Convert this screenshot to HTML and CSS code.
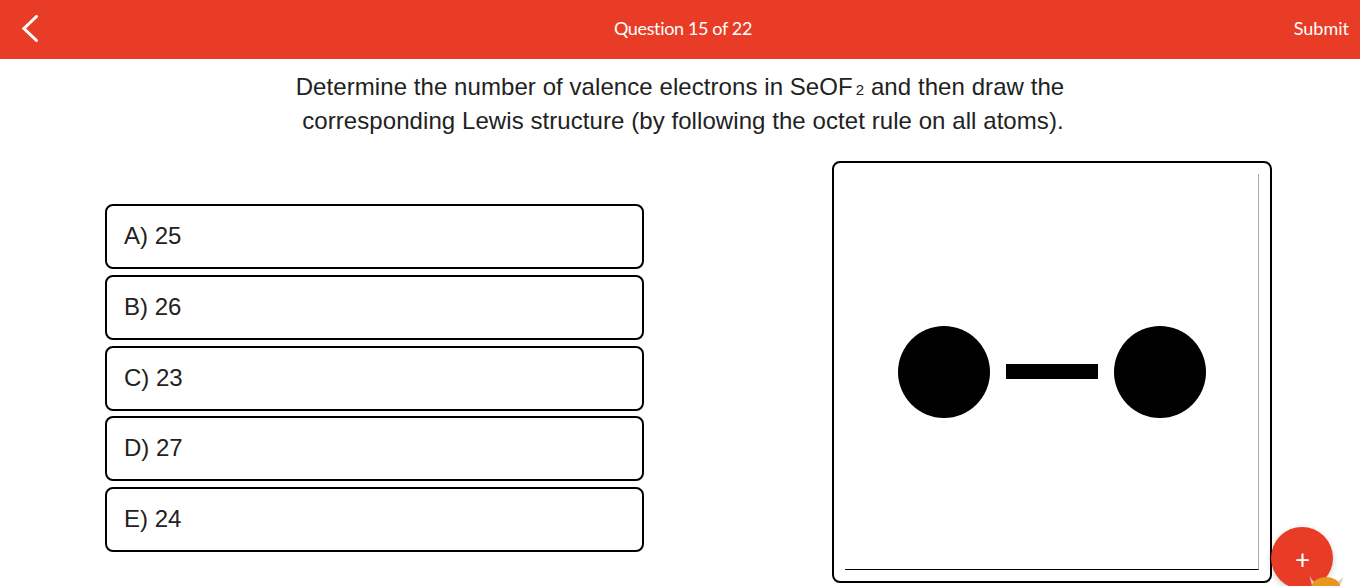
FILE: index.html
```html
<!DOCTYPE html>
<html lang="en">
<head>
<meta charset="utf-8">
<title>Question 15 of 22</title>
<link rel="stylesheet" href="styles.css">
</head>
<body>
<header class="topbar">
  <button class="back" aria-label="Back">
    <svg width="17" height="27" viewBox="0 0 17 27"><path d="M14.5 1.5 L2 13.5 L14.5 25.5" fill="none" stroke="#fff" stroke-width="3" stroke-linecap="round" stroke-linejoin="miter"/></svg>
  </button>
  <div class="progress">Question 15 of 22</div>
  <div class="submit">Submit</div>
</header>
<section class="question">
  <div>Determine the number of valence electrons in SeOF<span class="sub">2</span> and then draw the</div>
  <div class="line2">corresponding Lewis structure (by following the octet rule on all atoms).</div>
</section>
<main class="content">
  <div class="options">
    <div class="option">A) 25</div>
    <div class="option">B) 26</div>
    <div class="option">C) 23</div>
    <div class="option">D) 27</div>
    <div class="option">E) 24</div>
  </div>
  <div class="card">
    <div class="plot">
      <svg class="bond" width="414" height="395" viewBox="0 0 414 395">
        <circle cx="99" cy="198" r="46" fill="#000"/>
        <rect x="161" y="190" width="92" height="15" fill="#000"/>
        <circle cx="315" cy="198" r="46" fill="#000"/>
      </svg>
    </div>
  </div>
</main>
<div class="fab">+</div>
<svg class="mascot" width="38" height="14" viewBox="0 0 38 14">
  <path d="M1 1 C2 6 5 10 10 12 L8 14 L4 14 Z" fill="#d8d3c9"/>
  <path d="M36 0 C36 5 33 8 28 10 L31 14 L34 10 Z" fill="#d8d3c9"/>
  <ellipse cx="18" cy="14" rx="14" ry="9" fill="#e8961e"/>
</svg>
</body>
</html>
```
FILE: styles.css
```css
html, body {
  margin: 0;
  padding: 0;
  height: 586px;
  overflow: hidden;
  background: #fff;
  color: #222;
  font-family: "Liberation Sans", Arial, sans-serif;
}
.topbar {
  box-sizing: border-box;
  height: 59px;
  padding-bottom: 3px;
  background: #e83c27;
  color: #fff;
  display: grid;
  grid-template-columns: 1fr auto 1fr;
  align-items: center;
  font-family: Lato, sans-serif;
  font-size: 18px;
}
.back {
  justify-self: start;
  margin-left: 22px;
  padding: 0;
  border: 0;
  background: none;
  display: flex;
}
.progress {
  letter-spacing: -.36px;
  padding-left: 6px;
}
.submit {
  justify-self: end;
  margin-right: 11px;
}
.question {
  padding-top: 11px;
  font-size: 24px;
  line-height: 34px;
  letter-spacing: .07px;
  text-align: center;
}
.sub { font-size: 15px; line-height: 1; margin-left: 3px; }
.line2 { padding-left: 6px; }
.content {
  display: flex;
  align-items: flex-start;
  padding: 23px 0 0 105px;
}
.options {
  width: 539px;
  margin-top: 43px;
  margin-right: 188px;
  display: flex;
  flex-direction: column;
  gap: 5.8px;
}
.option {
  box-sizing: border-box;
  height: 65px;
  border: 2px solid #000;
  border-radius: 8px;
  padding: 0 0 1px 17px;
  display: flex;
  align-items: center;
  font-size: 24px;
}
.card {
  box-sizing: border-box;
  width: 440px;
  height: 422px;
  border: 2px solid #000;
  border-radius: 8px;
  padding: 11px 0 0 11px;
}
.plot {
  box-sizing: content-box;
  width: 413px;
  height: 395px;
  border-right: 1px solid #aaa;
  border-bottom: 1px solid #000;
}
.bond { display: block; }
.fab {
  position: absolute;
  left: 1271px;
  top: 527px;
  width: 62px;
  height: 62px;
  border-radius: 50%;
  background: #e83c27;
  box-shadow: 0 2px 6px rgba(0,0,0,.2);
  color: #fff;
  font-family: Lato, sans-serif;
  font-size: 26px;
  display: flex;
  align-items: center;
  justify-content: center;
  padding: 1px 0 0 1px;
  box-sizing: border-box;
}
.mascot {
  position: absolute;
  left: 1308px;
  top: 572px;
}
```
